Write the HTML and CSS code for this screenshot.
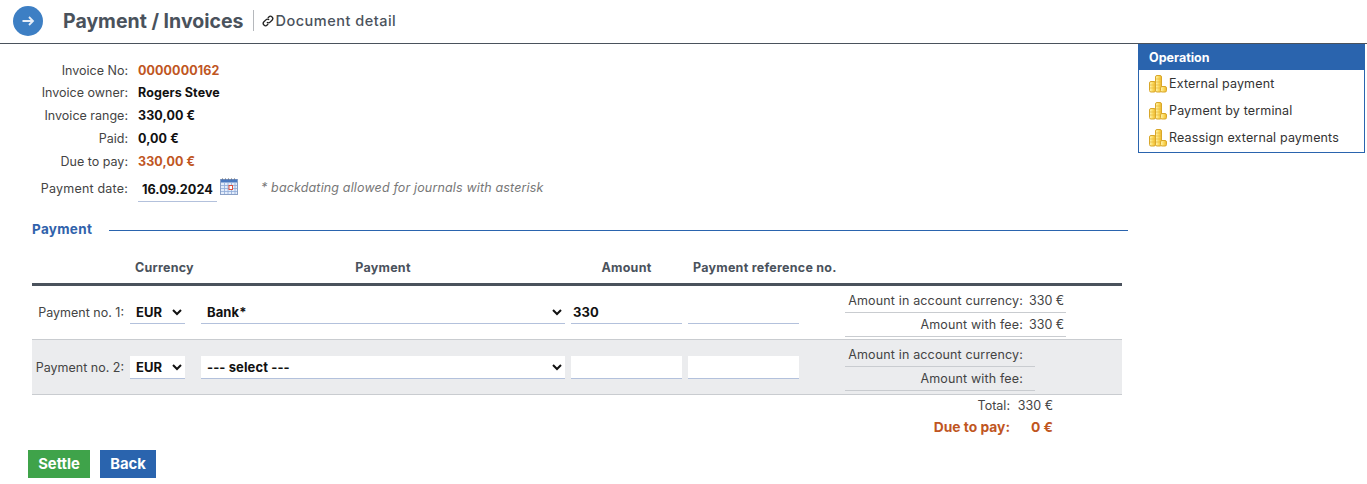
FILE: index.html
```html
<!DOCTYPE html>
<html lang="en">
<head>
<meta charset="utf-8">
<title>Payment / Invoices</title>
<link rel="stylesheet" href="styles.css">
</head>
<body>
<svg class="defs" width="0" height="0" aria-hidden="true">
  <defs>
    <linearGradient id="coin" x1="0" x2="1" y1="0" y2="0">
      <stop offset="0" stop-color="#fff6b8"/><stop offset="0.5" stop-color="#fcdc62"/><stop offset="1" stop-color="#efb82c"/>
    </linearGradient>
    <symbol id="coins" viewBox="0 0 18 18">
      <rect x="6.500" y="0.500" width="6" height="16.500" rx="1.500" fill="url(#coin)" stroke="#d9a72a"/>
      <rect x="0.500" y="6.500" width="6" height="10.500" rx="1.500" fill="url(#coin)" stroke="#d9a72a"/>
      <rect x="11.500" y="11.500" width="6" height="5.500" rx="1.500" fill="url(#coin)" stroke="#d9a72a"/>
      <path d="M7 4h5M7 7h5M7 10h5M7 13h5M1 10h5M1 13h5" stroke="#e6b83c" stroke-width="0.700"/>
    </symbol>
  </defs>
</svg>
<header class="top">
  <span class="round"><svg width="14" height="14" viewBox="0 0 14 14"><path d="M1.500 7h10.500M8 3l4 4-4 4" fill="none" stroke="#e6eef8" stroke-width="1.800"/></svg></span>
  <h1 class="title">Payment / Invoices</h1>
  <span class="sub"><svg class="link" width="12" height="12" viewBox="0 0 16 16"><path d="M6.500 9.500a3 3 0 0 0 4.300 0l2.600-2.600a3 3 0 0 0-4.300-4.300L7.800 3.900M9.500 6.500a3 3 0 0 0-4.300 0L2.600 9.100a3 3 0 0 0 4.300 4.300l1.300-1.300" fill="none" stroke="#222" stroke-width="1.800"/></svg>Document detail</span>
</header>
<div class="page">
  <main class="main">
    <dl class="info">
      <dt>Invoice No:</dt><dd class="accent">0000000162</dd>
      <dt>Invoice owner:</dt><dd>Rogers Steve</dd>
      <dt>Invoice range:</dt><dd>330,00 €</dd>
      <dt>Paid:</dt><dd>0,00 €</dd>
      <dt>Due to pay:</dt><dd class="accent">330,00 €</dd>
      <dt class="dt-date">Payment date:</dt>
      <dd class="date-cell">
        <input class="date" value="16.09.2024">
        <svg class="cal" width="18" height="17" viewBox="0 0 18 17"><rect x="0.500" y="1.500" width="17" height="15" fill="#e3ecfa" stroke="#8aa0c6"/><rect x="1" y="1.500" width="16" height="3" fill="#4a78bf"/><path d="M2 1h1M5 1h1M8 1h1M11 1h1M14 1h1" stroke="#666" stroke-width="1"/><path d="M1 7.500h16M1 10.500h16M1 13.500h16M4.500 5v11M8 5v11M11.500 5v11M15 5v11" stroke="#8fabd8" stroke-width="0.800"/><rect x="9" y="7.500" width="3.500" height="4" fill="#fff" stroke="#d9503f"/></svg>
        <em class="note">* backdating allowed for journals with asterisk</em>
      </dd>
    </dl>
    <div class="section"><span class="section-name">Payment</span><span class="section-line"></span></div>
    <section class="table">
      <div class="thead">
        <span></span><span class="th th-left">Currency</span><span class="th th-mid">Payment</span><span class="th">Amount</span><span class="th th-left">Payment reference no.</span>
      </div>
      <div class="row">
        <label class="row-label">Payment no. 1:</label>
        <select class="field"><option>EUR</option></select>
        <select class="field wide"><option>Bank*</option></select>
        <input class="field" value="330">
        <input class="field">
        <div class="amounts">
          <div class="amt"><span>Amount in account currency:</span><b>330 €</b></div>
          <div class="amt"><span>Amount with fee:</span><b>330 €</b></div>
        </div>
      </div>
      <div class="row alt">
        <label class="row-label">Payment no. 2:</label>
        <select class="field"><option>EUR</option></select>
        <select class="field wide"><option>--- select ---</option></select>
        <input class="field">
        <input class="field">
        <div class="amounts short">
          <div class="amt"><span>Amount in account currency:</span></div>
          <div class="amt"><span>Amount with fee:</span></div>
        </div>
      </div>
      <div class="totals">
        <span>Total:</span><span>330 €</span>
        <strong>Due to pay:</strong><strong>0 €</strong>
      </div>
    </section>
    <div class="actions">
      <button class="btn green">Settle</button>
      <button class="btn blue">Back</button>
    </div>
  </main>
  <aside class="side">
    <h2 class="side-title">Operation</h2>
    <a class="side-item"><svg width="18" height="18"><use href="#coins"/></svg>External payment</a>
    <a class="side-item"><svg width="18" height="18"><use href="#coins"/></svg>Payment by terminal</a>
    <a class="side-item"><svg width="18" height="18"><use href="#coins"/></svg>Reassign external payments</a>
  </aside>
</div>
</body>
</html>
```
FILE: styles.css
```css
* { box-sizing: border-box; }
html, body { margin: 0; padding: 0; }
body {
  font-family: Inter, "Open Sans", "Liberation Sans", sans-serif;
  font-size: 12.5px;
  color: #333;
  background: #fff;
  height: 484px;
  overflow: hidden;
}
.defs { position: absolute; }
.top {
  height: 44px;
  border-bottom: 1px solid #4a525c;
  display: flex;
  align-items: center;
  padding: 0 0 2px 13px;
}
.round {
  width: 30px;
  height: 30px;
  border-radius: 50%;
  background: #3d7fc4;
  display: flex;
  align-items: center;
  justify-content: center;
}
.title {
  margin: 0 9px 0 20px;
  font-size: 19.500px;
  font-weight: 700;
  color: #4a525c;
}
.sub {
  display: flex;
  align-items: center;
  gap: 2px;
  height: 21px;
  border-left: 1px solid #b5b8bc;
  padding-left: 8px;
  font-size: 14.500px;
  letter-spacing: 0.500px;
  font-weight: 500;
  color: #4a525c;
}
.page { display: flex; align-items: flex-start; padding-right: 2px; }
.main { width: 1138px; padding-left: 32px; flex: none; }
.info {
  margin: 14.700px 0 0;
  display: grid;
  grid-template-columns: 96px 1fr;
  column-gap: 10px;
  grid-auto-rows: 22.800px;
  align-items: center;
}
.info dt { text-align: right; white-space: nowrap; color: #444; }
.info dd { margin: 0; font-weight: 700; color: #111; letter-spacing: 0.100px; }
.info dd.accent { color: #c0561f; }
.date-cell { display: flex; align-items: center; height: 28px; margin-top: 9px !important; }
.dt-date { margin-top: 9px; letter-spacing: 0.200px; }
.date {
  width: 79px;
  height: 24px;
  margin-top: 3px;
  border: 0;
  border-bottom: 1px solid #b3c1dc;
  padding: 0 0 0 4px;
  font: 700 12.700px Inter, sans-serif;
  color: #111;
  background: transparent;
}
.cal { margin: 0 0 4px 3px; }
.note { margin: 0 0 2px 23px; font-style: italic; color: #777; font-weight: 400; letter-spacing: 0.150px; }
.section { display: flex; align-items: center; margin-top: 23px; height: 22px; width: 1096px; }
.section-name { font-weight: 700; font-size: 13.500px; letter-spacing: 0.300px; color: #2f62ab; width: 77px; }
.section-line { flex: 1; height: 1px; background: #2a64ae; margin-top: 2px; }
.table { width: 1090px; margin-top: 12px; }
.thead, .row {
  display: grid;
  grid-template-columns: 92px 55px 374px 111px 111px 1fr;
  column-gap: 6px;
}
.thead {
  height: 34px;
  border-bottom: 3px solid #4a525c;
  align-items: center;
  font-weight: 700;
  color: #4a525c;
}
.th { text-align: center; white-space: nowrap; font-size: 12.500px; letter-spacing: 0.250px; }
.th-left { text-align: left; padding-left: 5px; }
.th-mid { margin-left: 10px; }
.row {
  height: 54px;
  align-items: center;
  border-bottom: 1px solid #c9ccd0;
}
.row.alt { background: #ebecee; height: 55px; }
.row-label { text-align: right; white-space: nowrap; color: #444; }
.field {
  width: 100%;
  height: 23px;
  border: 0;
  border-bottom: 1px solid #b3c1dc;
  border-radius: 0;
  background: #fff;
  padding: 0 0 0 2px;
  font: 700 13px Inter, sans-serif;
  letter-spacing: 0.100px;
  color: #111;
  outline: none;
}
.wide { margin-left: 10px; width: 364px; }
.amounts { margin-left: 40px; width: 221px; }
.amounts.short { width: 190px; }
.amt {
  display: flex;
  height: 24px;
  align-items: center;
  gap: 6px;
  border-bottom: 1px solid #c9ccd0;
  color: #444;
  white-space: nowrap;
  letter-spacing: 0.150px;
  justify-content: flex-end;
  padding-right: 3px;
}
.amt span { width: 178px; text-align: right; flex: none; }
.amt b { font-weight: 400; width: 34px; flex: none; letter-spacing: 0; }
.amounts.short .amt { justify-content: flex-start; }
.totals {
  display: grid;
  grid-template-columns: 1fr 43px;
  column-gap: 0;
  width: 1021px;
  grid-auto-rows: 21px;
  align-items: center;
  text-align: right;
  color: #444;
}
.totals strong { color: #c0561f; font-weight: 700; font-size: 13.800px; }
.actions { display: flex; gap: 10px; margin: 13px 0 0 -4px; }
.btn {
  height: 28px;
  border: 0;
  padding: 0;
  color: #fff;
  font: 700 14.800px Inter, sans-serif;
}
.green { background: #3fa34a; width: 62px; }
.blue { background: #2a64ae; width: 56px; }
.side {
  width: 227px;
  height: 109px;
  border: 1px solid #2a64ae;
  border-top: 0;
  flex: none;
}
.side-title {
  margin: 0 -1px;
  height: 26px;
  background: #2a64ae;
  color: #fff;
  font-size: 12.500px;
  font-weight: 700;
  padding-left: 11px;
  line-height: 27px;
}
.side-item {
  display: flex;
  align-items: center;
  gap: 2px;
  height: 27px;
  padding-left: 10px;
  color: #333;
  letter-spacing: 0.150px;
}
```
